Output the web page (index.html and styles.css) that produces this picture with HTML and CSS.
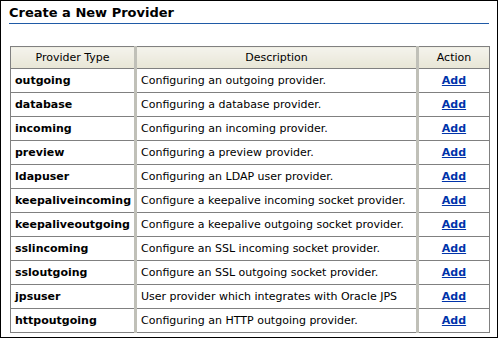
FILE: index.html
```html
<!DOCTYPE html>
<html lang="en">
<head>
    <meta charset="UTF-8" />
    <title>Create a New Provider</title>
    <link rel="stylesheet" href="styles.css">
</head>
<body>

<div class="panel">
    <h2 class="panel-title">Create a New Provider</h2>

    <table class="provider-table">
        <thead>
            <tr>
                <th class="col-type">Provider Type</th>
                <th class="col-desc">Description</th>
                <th class="col-action">Action</th>
            </tr>
        </thead>
        <tbody>
            <tr><td class="type">outgoing</td><td>Configuring an outgoing provider.</td><td class="action"><a href="#">Add</a></td></tr>
            <tr><td class="type">database</td><td>Configuring a database provider.</td><td class="action"><a href="#">Add</a></td></tr>
            <tr><td class="type">incoming</td><td>Configuring an incoming provider.</td><td class="action"><a href="#">Add</a></td></tr>
            <tr><td class="type">preview</td><td>Configuring a preview provider.</td><td class="action"><a href="#">Add</a></td></tr>
            <tr><td class="type">ldapuser</td><td>Configuring an LDAP user provider.</td><td class="action"><a href="#">Add</a></td></tr>
            <tr><td class="type">keepaliveincoming</td><td>Configure a keepalive incoming socket provider.</td><td class="action"><a href="#">Add</a></td></tr>
            <tr><td class="type">keepaliveoutgoing</td><td>Configure a keepalive outgoing socket provider.</td><td class="action"><a href="#">Add</a></td></tr>
            <tr><td class="type">sslincoming</td><td>Configure an SSL incoming socket provider.</td><td class="action"><a href="#">Add</a></td></tr>
            <tr><td class="type">ssloutgoing</td><td>Configure an SSL outgoing socket provider.</td><td class="action"><a href="#">Add</a></td></tr>
            <tr><td class="type">jpsuser</td><td>User provider which integrates with Oracle JPS</td><td class="action"><a href="#">Add</a></td></tr>
            <tr><td class="type">httpoutgoing</td><td>Configuring an HTTP outgoing provider.</td><td class="action"><a href="#">Add</a></td></tr>
        </tbody>
    </table>
</div>

</body>
</html>
```

FILE: styles.css
```css
body, html {
    margin: 0;
    padding: 0;
    background: #fff;
    font-family: 'DejaVu Sans', Tahoma, sans-serif;
    font-size: 11px;
    color: #000;
}

.panel {
    width: 496px;
    height: 336px;
    border: 1px solid #000;
    padding: 0;
}

.panel-title {
    margin: 4px 8px 0 8px;
    padding: 0 0 3px 0;
    font-size: 13px;
    font-weight: bold;
    border-bottom: 1px solid #1f5aa6;
    height: 15px;
    line-height: 15px;
}

.provider-table {
    margin: 22px 0 0 9px;
    width: 480px;
    border-collapse: collapse;
    border: 1px solid #808080;
}

.provider-table th {
    height: 21px;
    font-weight: normal;
    text-align: center;
    background: linear-gradient(180deg, #f4f3ec, #e8e6d6);
    border-bottom: 1px solid #808080;
    padding: 0;
}

.provider-table td {
    height: 23px;
    padding: 0 0 0 4px;
    border-bottom: 1px solid #808080;
}

.provider-table th + th,
.provider-table td + td {
    border-left: 3px solid #c0c0b8;
}

.col-type {
    width: 123px;
}

.col-action {
    width: 70px;
}

.type {
    font-weight: bold;
}

.provider-table td.action {
    text-align: center;
    padding: 0;
}

.action a {
    color: #0033aa;
    font-weight: bold;
    text-decoration: underline;
}
```
